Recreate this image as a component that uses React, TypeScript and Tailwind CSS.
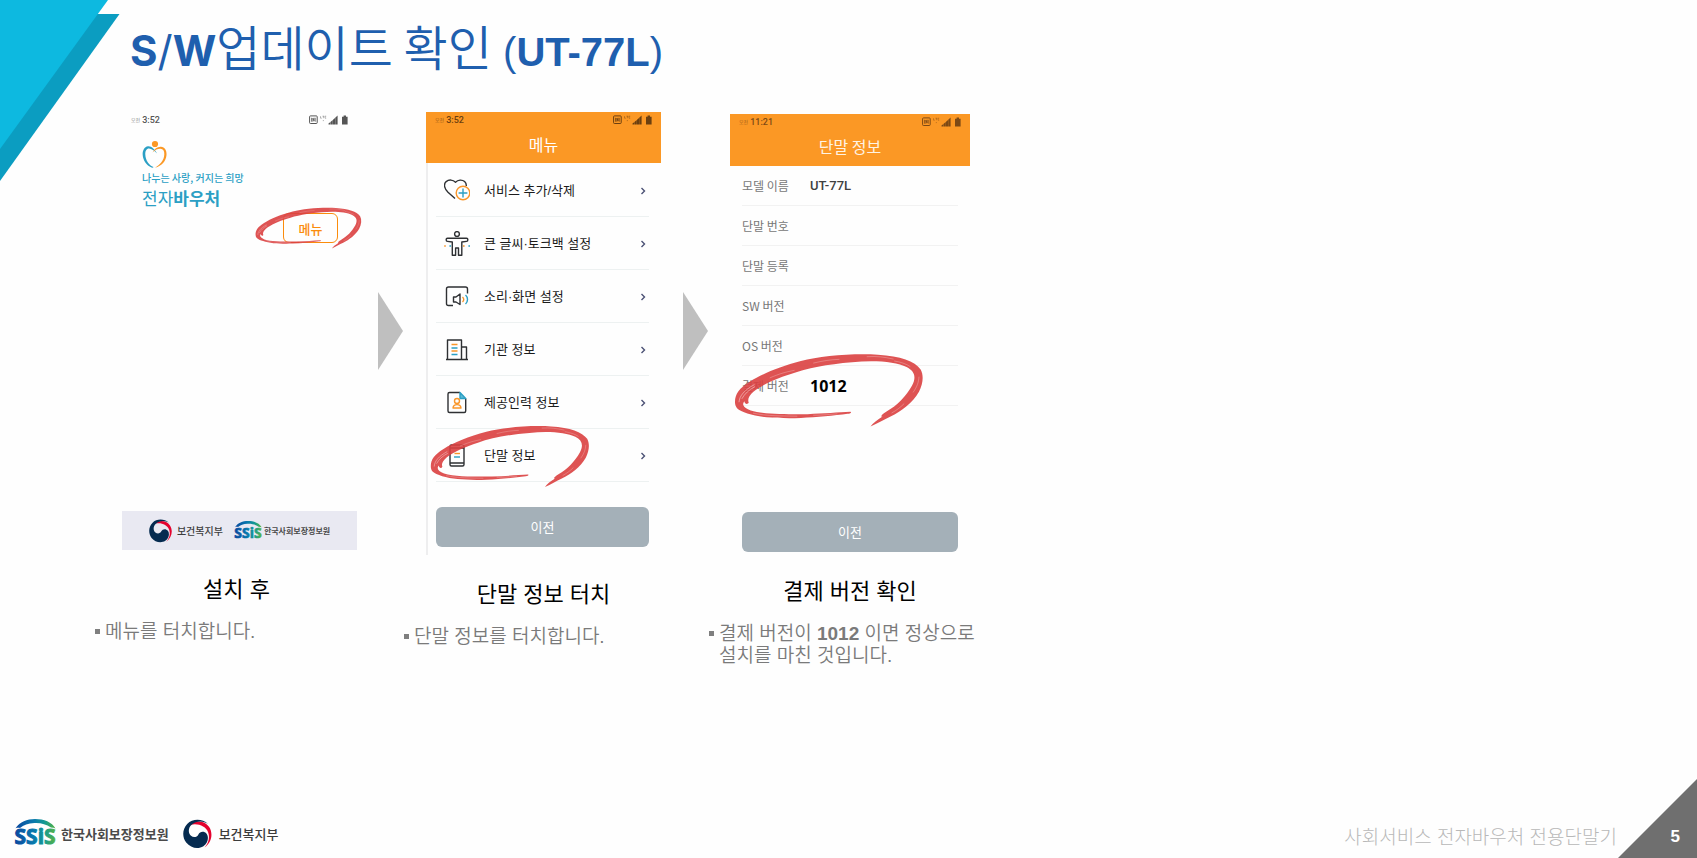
import React from "react";

type Size = "sm" | "lg";

function Ring({ className }: { className: string }) {
  return (
    <svg aria-hidden="true" viewBox="192 68 568 222" className={`pointer-events-none absolute ${className}`}>
      <path
        fill="#da4040"
        fillOpacity="0.9"
        d="M195 217C194 192 206 174 240 153C275 131 330 108 392 92C450 77 540 69 622 73C690 77 732 92 750 117C760 136 757 160 745 184C727 216 692 243 660 258C640 267 622 279 600 288C607 277 621 268 636 258C628 260 633 252 648 243C680 225 707 197 724 166C738 139 732 123 708 110C676 94 610 89 545 96C470 102 410 114 362 131C318 145 275 163 250 184C236 196 232 207 236 216C232 224 224 220 223 212C214 222 222 232 242 240C280 252 350 251 412 251C460 249 505 246 540 244C544 246 541 249 532 250C490 255 440 261 392 262C350 264 320 262 290 260C250 256 214 245 201 233C197 228 195 222 195 217Z"
      />
      <g fill="none" stroke="#fff" strokeLinecap="round" strokeOpacity="0.5">
        <path strokeWidth="2.5" d="M207 214C208 196 224 178 252 163M216 204C224 190 236 178 254 169" />
        <path strokeWidth="1.5" d="M300 142C330 129 350 124 372 120M430 98C460 91 480 88 506 87M590 79C620 77 640 80 668 86M672 92C690 95 706 100 718 108M745 140C744 155 740 168 728 185M700 220C690 230 680 238 664 247" />
        <path strokeWidth="1.5" d="M250 248C290 257 340 256 380 257M430 254C460 254 480 251 500 250" />
      </g>
    </svg>
  );
}

function StatusBar({ time, color }: { time: string; color: string }) {
  return (
    <div className={`flex h-4 items-center justify-between px-2 ${color}`}>
      <span className="flex items-center gap-0.5 pl-px font-[Roboto,'Noto_Sans_CJK_KR',sans-serif]">
        <span className="text-[5px] leading-4 opacity-70">오전</span>
        <span className="text-[9px] font-medium leading-4">{time}</span>
      </span>
      <svg aria-hidden="true" viewBox="0 0 40 10" className="h-[10px] w-10" fill="currentColor">
        <rect x="0.6" y="0.9" width="7.6" height="7.6" rx="0.8" fill="none" stroke="currentColor" strokeWidth="1" />
        <path d="M2.6 6.7V2.8M6.2 6.7V2.8M3.9 6.7V3.2L5 5.9V2.8" fill="none" stroke="currentColor" strokeWidth="0.8" />
        <path d="M11.5 1.2V3.2H12.8M13.5 1.2H15.3M14.4 1.2V3.2M17.2 1.2H16V3.2H17.2M13.8 5.6H15" fill="none" stroke="currentColor" strokeWidth="0.6" opacity="0.7" />
        <path d="M19.5 9.5V8.4L21.4 6.9V9.5ZM21.7 9.5V6.7L23.8 5V9.5ZM24 9.5V4.8L26 3V9.5ZM26.2 9.5V2.8L28.6 0.4V9.5Z" />
        <path d="M33 1.8H34.6V0.6H37V1.8H38.6V9.5H33Z" />
      </svg>
    </div>
  );
}

function SsisLogo({ size, id }: { size: Size; id: string }) {
  return (
    <svg role="img" aria-label="SSiS" viewBox="0 0 45 30" className={size === "lg" ? "h-[30px] w-[45px]" : "h-5 w-[30px]"}>
      <defs>
        <linearGradient id={id} gradientUnits="userSpaceOnUse" x1="0" x2="44" y1="0" y2="0">
          <stop offset="0" stopColor="#0c459e" />
          <stop offset="0.45" stopColor="#0879ad" />
          <stop offset="0.7" stopColor="#159a91" />
          <stop offset="1" stopColor="#68b82e" />
        </linearGradient>
      </defs>
      <path fill={`url(#${id})`} d="M1.5 9.2C6 2.8 13 0 21 0C30 0 38 3.2 41.5 9.4C40.2 8.9 38.8 8.6 37 8.6C32 5.2 27 3.7 20.5 4C14 4.2 9.5 6 6 8.9C4.3 8.6 3.2 8.7 1.5 9.2Z" />
      <text x="0.5" y="25.2" fill={`url(#${id})`} stroke={`url(#${id})`} strokeWidth="1" fontFamily="'Open Sans', sans-serif" fontWeight="700" fontSize="21">
        SSiS
      </text>
    </svg>
  );
}

function Taegeuk({ size }: { size: Size }) {
  return (
    <svg aria-hidden="true" viewBox="0 0 30 30" className={size === "lg" ? "h-[30px] w-[30px]" : "h-6 w-6"}>
      <path fill="#e4032e" d="M7.5 5.8C13 .8 21.5 1.8 26 7.8C30.4 14.2 28.8 23.6 21.6 28.4C25.6 24 27 18.6 25.2 13.4C23 6.8 14.5 3.8 7.5 5.8Z" />
      <path fill="#052b50" d="M25 4.9C19.2-.5 9.8-.7 4.2 4.9C-.8 10-1 18.3 3.2 23.6C7.4 29 15 30.8 20.4 27.3C25.2 24 26 18 23.6 14.8C21.2 11.8 17 12.3 15.4 15.4C14 18.3 10.4 18.8 8 16.8C5 14.2 5 9 8.6 5.8C13.8 1.4 20.4 1.7 25 4.9Z" />
    </svg>
  );
}

function Ministry({ size }: { size: Size }) {
  return (
    <span className={size === "lg" ? "flex items-center gap-1.5" : "flex items-center gap-1"}>
      <Taegeuk size={size} />
      <span className={size === "lg" ? "text-[13px] font-medium leading-5 text-[#3c3c3c]" : "text-[10px] font-medium leading-4 text-[#3c3c3c]"}>보건복지부</span>
    </span>
  );
}

function Agency({ size, id }: { size: Size; id: string }) {
  return (
    <span className={size === "lg" ? "flex items-center gap-0.5" : "flex items-center"}>
      <SsisLogo size={size} id={id} />
      <span className={size === "lg" ? "text-[13px] font-bold leading-5 text-[#4a4a4a]" : "text-[8px] font-bold leading-4 text-[#4a4a4a]"}>한국사회보장정보원</span>
    </span>
  );
}

function Arrow() {
  return (
    <svg aria-hidden="true" viewBox="0 0 25 78" className="mt-[180px] h-[78px] w-[25px]">
      <path fill="#bfbfbf" d="M0 0L25 39L0 78Z" />
    </svg>
  );
}

const dark = "#2e3033";
const orange = "#f9962a";
const blue = "#2b9fc4";

const icons: Record<string, React.ReactNode> = {
  heart: (
    <>
      <path stroke={dark} d="M11 20.5L4 14.2C-.2 10-.4 6 2.2 3.6C5 1.2 9 1.8 11.5 4.2C14 1.8 18 1.3 20.6 3.6C22 4.9 22.4 6.4 22.3 8" />
      <circle cx="19" cy="15" r="6.8" stroke={orange} />
      <path stroke={blue} d="M19 10.6V19.4M14.6 15H23.4" />
    </>
  ),
  person: (
    <>
      <circle cx="13" cy="3" r="2.4" stroke={dark} />
      <path stroke={dark} d="M3.5 7.2H22.5C24.3 7.2 24.3 10.4 22.5 10.4L17.8 11V24.2H14.5V17H11.6V24.2H8.3V11L3.5 10.4C1.7 10.4 1.7 7.2 3.5 7.2Z" />
      <path stroke={orange} d="M0.2 15H1.8M19 15H20.6" />
      <path stroke={blue} d="M5.4 15H7M24.4 15H26" />
    </>
  ),
  sound: (
    <>
      <path stroke={dark} d="M9 21.5H4.5Q2.5 21.5 2.5 19.5V5Q2.5 3 4.5 3H21.5Q23.5 3 23.5 5V9.5M9.5 13H12L16 10V20.5L12 18H9.5Z" />
      <path stroke={orange} d="M18.5 13C20.2 14.5 20.2 16.5 18.5 18" />
      <path stroke={blue} d="M21.5 11C24.2 13.5 24.2 17.5 21.5 20" />
    </>
  ),
  building: (
    <>
      <path stroke={dark} d="M2 22.5H24M3.5 22V3H17.5V22M17.5 10H22.5V22" />
      <path stroke={orange} d="M7.5 7.5H13.5M7.5 14H13.5" />
      <path stroke={blue} d="M7.5 11H13.5M7.5 17.5H13.5" />
    </>
  ),
  profile: (
    <>
      <path stroke={dark} d="M16 2.5H5.5Q4 2.5 4 4V21Q4 22.5 5.5 22.5H20.2Q21.7 22.5 21.7 21V8.5" />
      <path stroke={blue} fill="#5dbad5" d="M16 2.5L21.7 8.5H16Z" />
      <circle cx="13" cy="11" r="2.5" stroke={orange} />
      <path stroke={orange} d="M9 18C9.2 15.5 10.8 14.6 13 14.6S16.8 15.5 17 18Z" />
    </>
  ),
  device: (
    <>
      <rect x="6" y="2" width="14" height="21" rx="1.5" stroke={dark} />
      <path stroke={dark} d="M6 5H20M6 20H20" />
      <path stroke={orange} d="M10.5 10.5H16" />
      <path stroke={blue} d="M10 14H16" />
    </>
  ),
};

const menu = [
  { icon: "heart", label: "서비스 추가/삭제" },
  { icon: "person", label: "큰 글씨·토크백 설정" },
  { icon: "sound", label: "소리·화면 설정" },
  { icon: "building", label: "기관 정보" },
  { icon: "profile", label: "제공인력 정보" },
  { icon: "device", label: "단말 정보" },
];

const details = [
  { label: "모델 이름", value: "UT-77L", style: "text-[13px] font-medium text-[#404040] font-[Roboto,sans-serif]" },
  { label: "단말 번호", value: "", style: "" },
  { label: "단말 등록", value: "", style: "" },
  { label: "SW 버전", value: "", style: "" },
  { label: "OS 버전", value: "", style: "" },
  { label: "결제 버전", value: "1012", style: "text-base font-bold text-black font-['Open_Sans',sans-serif]" },
];

function Caption({ title, children }: { title: string; children: React.ReactNode }) {
  return (
    <div className="pt-6 font-['Liberation_Sans','Noto_Sans_CJK_KR',sans-serif]">
      <h2 className="text-center text-[22px] font-normal leading-8 text-black">{title}</h2>
      <ul className="mt-[15px] text-[19px] font-[350] leading-[22px] text-[#7a7a7a]">
        <li className="flex items-start gap-[5px]">
          <span aria-hidden="true" className="mt-2 h-[5px] w-[5px] shrink-0 bg-[#7f7f7f]" />
          <span>{children}</span>
        </li>
      </ul>
    </div>
  );
}

function BackButton() {
  return (
    <button type="button" className="h-10 w-full rounded-md bg-[#a4b0b8] text-[13px] text-white">
      이전
    </button>
  );
}

export default function App() {
  return (
    <main className="relative flex min-h-screen flex-col overflow-hidden bg-[#fefefe] font-['Noto_Sans_CJK_KR',sans-serif]">
      <svg aria-hidden="true" viewBox="0 0 120 182" className="absolute left-0 top-0 h-[182px] w-[120px]">
        <path fill="#0b9dc1" d="M90 14H119.5L0 181V100Z" />
        <path fill="#0db9e0" d="M0 0H108L0 149Z" />
      </svg>

      <h1 className="flex h-28 items-start pl-[130px] pt-[9px] text-[48px] font-[350] leading-[72px] text-[#1f5fae]">
        <span className="whitespace-pre">
          <span className="font-[Inter,sans-serif] text-[42px] font-bold">S<span className="font-normal">/</span>W</span>
          업데이트 확인
          <span className="font-['Liberation_Sans',sans-serif] text-[40px] font-bold"> <span className="font-normal">(</span>UT-77L<span className="font-normal">)</span></span>
        </span>
      </h1>

      <div className="grid grid-cols-[283px_26px_279px_26px_282px] items-start pl-[95px]">
        <section>
          <div className="relative ml-[27px] flex h-[438px] w-[235px] flex-col">
            <StatusBar time="3:52" color="text-[#555]" />
            <div className="flex flex-col items-start pl-5 pt-3">
              <svg aria-hidden="true" viewBox="0 0 25 28" className="h-7 w-[25px]">
                <circle cx="13" cy="4" r="3.1" fill="#fb9825" />
                <path fill="#2b9fc4" d="M15 13.4C13 9.5 9.5 6 6 6.3C2.3 6.7.4 10.7.7 15C1 20 4.5 25.5 9.5 27.5C10.5 27.8 11.2 27.7 11.5 27C7 25.5 3.4 20 3.3 14.5C3.2 11 4.5 8.6 7 8.6C9.5 8.6 12.5 11 15 13.4Z" />
                <path fill="#fb9825" d="M10.5 12.4C12.5 9 15.5 6.5 19 6.8C22.7 7 24.9 10.5 24.5 15C24 21 20 26 13 27.7C18 24.5 22 20.5 22.3 14.5C22.5 11 21 8.9 18.5 8.8C16 8.7 13.5 9.5 10.5 12.4Z" />
              </svg>
              <p className="text-[10px] font-medium leading-5 text-[#2b9fc4]">나누는 사랑, 커지는 희망</p>
              <p className="text-[17px] leading-5 text-[#2b9fc4]">전자<span className="font-bold">바우처</span></p>
            </div>
            <button type="button" className="mr-[19px] mt-[5px] h-[30px] w-[55px] self-end rounded-md border border-[#fb8c0c] text-[13px] font-medium leading-none text-[#fb8c0c]">
              메뉴
            </button>
            <Ring className="-right-[5px] top-[95px] w-[107px]" />
            <div className="mt-auto flex h-[39px] items-center justify-center gap-[11px] bg-[#e9e9f2]">
              <Ministry size="sm" />
              <Agency size="sm" id="ssis-banner" />
            </div>
          </div>
          <Caption title="설치 후">메뉴를 터치합니다.</Caption>
        </section>

        <Arrow />

        <section>
          <div className="relative mx-auto flex h-[443px] w-[235px] flex-col">
            <header className="h-[51px] bg-[#fb9825]">
              <StatusBar time="3:52" color="text-[#6b3f10]" />
              <h3 className="text-center text-base leading-8 text-white">메뉴</h3>
            </header>
            <div className="flex grow flex-col border-l-2 border-[#eeeeef] pl-2 pr-3">
              <ul className="pt-px">
                {menu.map((item) => (
                  <li key={item.label} className="border-b border-[#edf1f1]">
                    <button type="button" className="flex h-[52px] w-full items-center pl-2 pr-[3px] pt-0.5 text-left text-[13px] text-[#1c1c1c]">
                      <svg aria-hidden="true" viewBox="0 0 26 26" fill="none" strokeWidth="1.4" strokeLinejoin="round" className="h-[26px] w-[26px] shrink-0">
                        {icons[item.icon]}
                      </svg>
                      <span className="grow pl-3.5 font-['Liberation_Sans','Noto_Sans_CJK_KR',sans-serif]">{item.label}</span>
                      <svg aria-hidden="true" viewBox="0 0 6 8" fill="none" stroke="#4b5175" strokeWidth="1.4" className="h-2 w-1.5">
                        <path d="M1.5 1L4.5 4L1.5 7" />
                      </svg>
                    </button>
                  </li>
                ))}
              </ul>
              <div className="mt-[25px]">
                <BackButton />
              </div>
            </div>
            <Ring className="left-1 top-[313px] w-[160px]" />
          </div>
          <Caption title="단말 정보 터치">단말 정보를 터치합니다.</Caption>
        </section>

        <Arrow />

        <section className="pt-0.5">
          <div className="relative mx-auto flex h-[438px] w-60 flex-col">
            <header className="h-[52px] bg-[#fb9825]">
              <StatusBar time="11:21" color="text-[#7c4915]" />
              <h3 className="text-center text-base leading-8 text-[#fff3e3]">단말 정보</h3>
            </header>
            <dl className="px-3">
              {details.map((item) => (
                <div key={item.label} className="flex h-10 items-center border-b border-[#f2f2f2] text-xs text-[#777]">
                  <dt className="w-[68px]">{item.label}</dt>
                  <dd className={item.style}>{item.value}</dd>
                </div>
              ))}
            </dl>
            <div className="mt-auto px-3">
              <BackButton />
            </div>
            <Ring className="left-1 top-[239px] w-[190px]" />
          </div>
          <Caption title="결제 버전 확인">
            결제 버전이 <b className="text-[19px] font-bold leading-none">1012</b> 이면 정상으로
            <br />
            설치를 마친 것입니다.
          </Caption>
        </section>
      </div>

      <footer className="relative mt-auto flex h-[79px] items-end justify-between pl-3.5">
        <div className="flex items-center gap-3.5 pb-[9px]">
          <Agency size="lg" id="ssis-footer" />
          <Ministry size="lg" />
        </div>
        <div className="flex items-end">
          <p className="pb-1.5 font-['Liberation_Sans','Noto_Sans_CJK_KR',sans-serif] text-[19px] font-light leading-7 text-[#b8b8b8]">사회서비스 전자바우처 전용단말기</p>
          <div className="relative flex h-[79px] w-20 items-end justify-end pb-2 pr-[17px]">
            <svg aria-hidden="true" viewBox="0 0 79 79" className="absolute bottom-0 right-0 h-[79px] w-[79px]">
              <path fill="#6f6f6f" d="M79 0V79H0Z" />
            </svg>
            <span className="relative font-['Liberation_Sans',sans-serif] text-[17px] font-bold leading-[26px] text-white">5</span>
          </div>
        </div>
      </footer>
    </main>
  );
}
